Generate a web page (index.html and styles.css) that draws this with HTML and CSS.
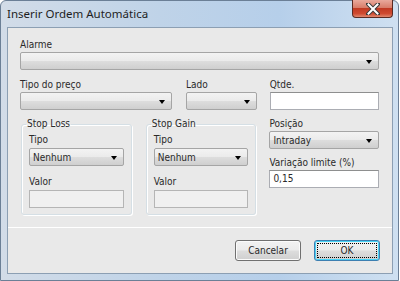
FILE: index.html
```html
<!DOCTYPE html>
<html>
  <head>
    <meta charset="utf-8" />
    <link rel="stylesheet" href="styles.css">
  </head>
  <body>
    <div class="window">
      <div class="titlebar">
        <span class="title">Inserir Ordem Automática</span>
        <div class="close-btn">
          <svg width="14" height="12" viewBox="0 0 14 12">
            <path d="M2 1 L12 11 M12 1 L2 11" stroke="#3a3a3a" stroke-width="4" stroke-linecap="square" />
            <path d="M2.5 1.5 L11.5 10.5 M11.5 1.5 L2.5 10.5" stroke="#ffffff" stroke-width="2" stroke-linecap="square" />
          </svg>
        </div>
      </div>

      <div class="client">
        <div class="form">
          <div class="field">
            <label>Alarme</label>
            <div class="combo"><span></span><i class="arrow"></i></div>
          </div>

          <div class="row">
            <div class="field w-preco">
              <label>Tipo do preço</label>
              <div class="combo"><span></span><i class="arrow"></i></div>
            </div>
            <div class="field w-lado">
              <label>Lado</label>
              <div class="combo"><span></span><i class="arrow"></i></div>
            </div>
            <div class="field w-right">
              <label>Qtde.</label>
              <div class="textbox"></div>
            </div>
          </div>

          <div class="row bottom-row">
            <fieldset class="group">
              <legend>Stop Loss</legend>
              <label>Tipo</label>
              <div class="combo small"><span>Nenhum</span><i class="arrow"></i></div>
              <label class="sub">Valor</label>
              <div class="textbox disabled"></div>
            </fieldset>
            <fieldset class="group">
              <legend>Stop Gain</legend>
              <label>Tipo</label>
              <div class="combo small"><span>Nenhum</span><i class="arrow"></i></div>
              <label class="sub">Valor</label>
              <div class="textbox disabled"></div>
            </fieldset>
            <div class="field w-right right-col">
              <label>Posição</label>
              <div class="combo"><span>Intraday</span><i class="arrow"></i></div>
              <label class="sub">Variação limite (%)</label>
              <div class="textbox"><span>0,15</span></div>
            </div>
          </div>
        </div>

        <div class="footer">
          <button class="btn">Cancelar</button>
          <button class="btn default"><span>OK</span></button>
        </div>
      </div>
    </div>
  </body>
</html>
```

FILE: styles.css
```css
html,
body {
  margin: 0;
  padding: 0;
  width: 400px;
  height: 281px;
  overflow: hidden;
  background: #ffffff;
}
body {
  font-family: "DejaVu Sans Condensed", "DejaVu Sans", sans-serif;
  font-stretch: condensed;
  font-size: 10px;
  color: #2a2a2a;
}
.window {
  box-sizing: border-box;
  width: 399px;
  height: 281px;
  border: 1px solid #6b7f96;
  border-radius: 6px 6px 0 0;
  background: linear-gradient(90deg, #d2dce8 0%, #bfd3e8 40%, #b6cfea 70%, #cfe0f1 100%);
  display: flex;
  flex-direction: column;
  padding: 0 5px 6px 6px;
}
.titlebar {
  height: 26px;
  display: flex;
  justify-content: space-between;
  align-items: flex-start;
}
.title {
  font-family: "Noto Sans", sans-serif;
  font-stretch: normal;
  font-size: 11.5px;
  color: #1e1e1e;
  margin-top: 5px;
}
.close-btn {
  width: 41px;
  height: 18px;
  margin-top: -1px;
  border: 1px solid #5a2a22;
  border-top: none;
  border-radius: 0 0 4px 4px;
  box-sizing: border-box;
  background: linear-gradient(180deg, #e9a99c 0%, #d87d6a 45%, #c13a23 50%, #cf4a30 80%, #e0886f 100%);
  display: flex;
  align-items: center;
  justify-content: center;
}
.client {
  flex: 1;
  background: #e9e9e9;
  border: 1px solid #8c9fb3;
  display: flex;
  flex-direction: column;
}
.form {
  padding: 11px 13px 0 12px;
  height: 188px;
  border-bottom: 1px solid #ffffff;
}
.field {
  display: flex;
  flex-direction: column;
}
label {
  display: block;
  height: 12px;
  line-height: 12px;
  margin-bottom: 1px;
}
.combo {
  box-sizing: border-box;
  height: 18px;
  border: 1px solid #a5a5a5;
  border-radius: 2px;
  background: linear-gradient(180deg, #f3f3f3 0%, #ebebeb 48%, #dddddd 52%, #cfcfcf 100%);
  display: flex;
  justify-content: space-between;
  align-items: center;
  padding: 0 6px 0 3px;
}
.arrow {
  width: 0;
  height: 0;
  border-left: 3px solid transparent;
  border-right: 3px solid transparent;
  border-top: 4px solid #000000;
  margin-top: 1px;
}
.textbox {
  box-sizing: border-box;
  height: 18px;
  background: #ffffff;
  border: 1px solid #abadb3;
  border-top-color: #8e8f8f;
  padding: 0 3px;
  line-height: 16px;
}
.textbox.disabled {
  background: #f0f0f0;
  border-color: #b5b5b5;
}
.row {
  display: flex;
  gap: 13px;
  margin-top: 9px;
}
.w-preco {
  width: 153px;
}
.w-lado {
  width: 71px;
  margin-left: 1px;
}
.w-right {
  width: 110px;
}
.bottom-row {
  margin-top: 8px;
  gap: 14px;
}
.group {
  box-sizing: border-box;
  width: 111px;
  height: 97px;
  margin: 0 0 0 1px;
  padding: 4px 7px 0 7px;
  border: 1px solid #d5dfe5;
  box-shadow: inset 1px 1px 0 #ffffff, 1px 1px 0 #ffffff;
  border-radius: 3px;
}
.group + .group {
  margin-left: 0;
}
legend {
  padding: 0 1px;
  margin-left: -3px;
  height: 12px;
  line-height: 12px;
}
.group label {
  margin-bottom: 2px;
}
.group .sub {
  margin-top: 10px;
}
.right-col {
  margin-left: -1px;
}
.right-col .sub {
  margin-top: 8px;
}
.footer {
  flex: 1;
  display: flex;
  justify-content: flex-end;
  align-items: flex-start;
  gap: 13px;
  padding: 12px 12px 0 0;
}
.btn {
  box-sizing: border-box;
  width: 66px;
  height: 21px;
  font-family: inherit;
  font-stretch: condensed;
  font-size: 10px;
  color: #2a2a2a;
  border: 1px solid #707070;
  border-radius: 3px;
  background: linear-gradient(180deg, #f2f2f2 0%, #ebebeb 48%, #dddddd 52%, #cfcfcf 100%);
  box-shadow: inset 0 0 0 1px #fbfbfb;
  padding: 0;
}
.btn.default {
  border-color: #3c7fb1;
  box-shadow: inset 0 0 0 1px #48d2f5;
  padding: 2px;
}
.btn.default span {
  display: flex;
  align-items: center;
  justify-content: center;
  height: 100%;
  outline: 1px dotted #000000;
  outline-offset: -1px;
}
```
